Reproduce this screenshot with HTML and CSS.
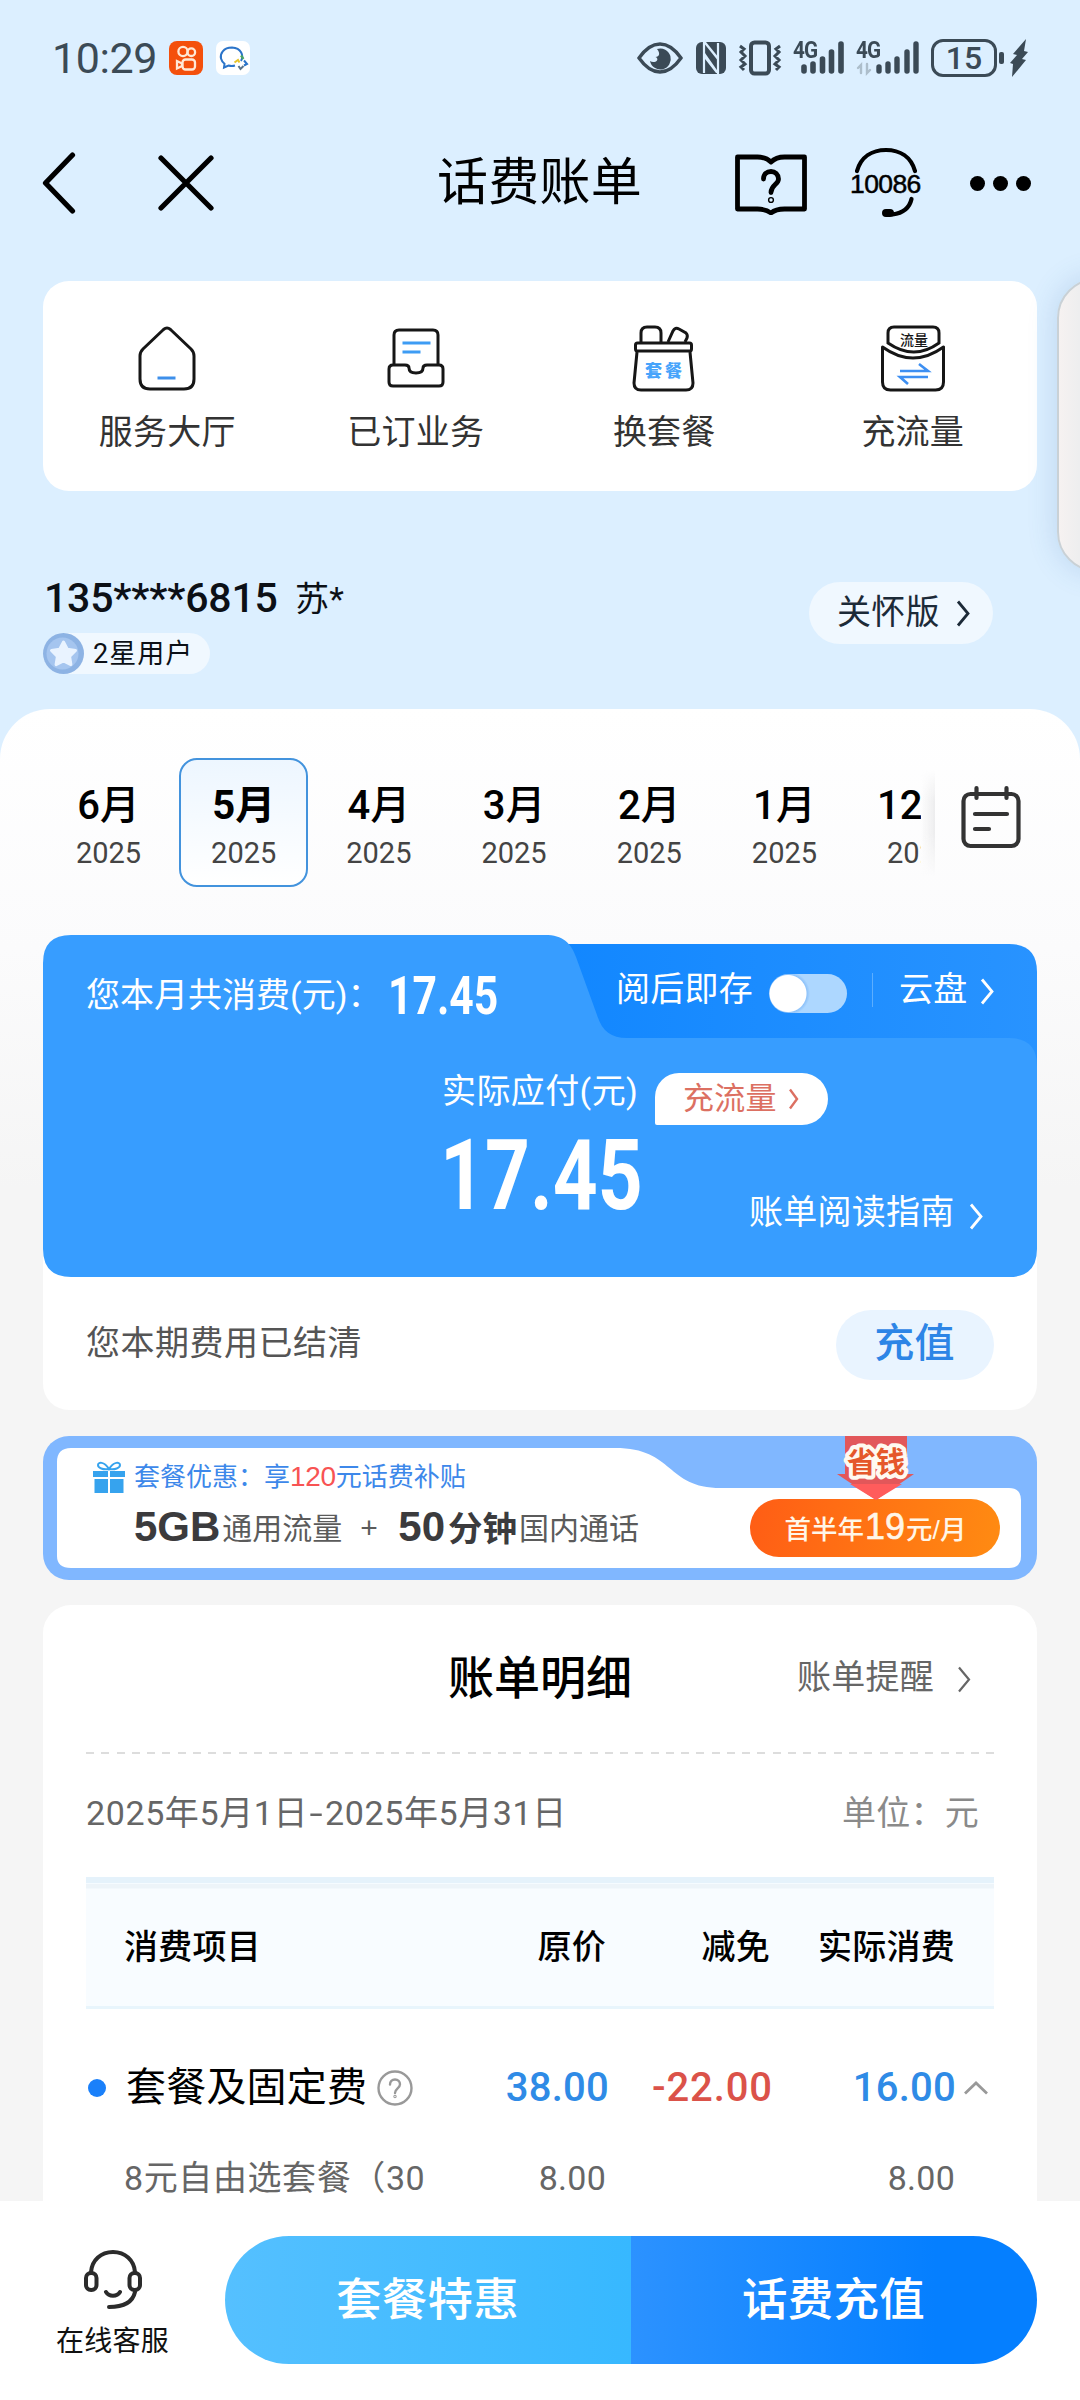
FILE: index.html
```html
<!DOCTYPE html>
<html lang="zh-CN">
<head>
<meta charset="utf-8">
<title>话费账单</title>
<link rel="stylesheet" href="styles.css">
</head>
<body>
<div class="page">
  <main class="content">
    <div class="statusbar">
      <span class="clock">10:29</span>
      <svg class="app-kuai" width="34" height="34" viewBox="0 0 34 34"><rect width="34" height="34" rx="8" fill="#f4500c"/><g fill="none" stroke="#ffe9d6" stroke-width="2.3"><circle cx="14" cy="10.5" r="4.6"/><circle cx="22.3" cy="11.2" r="3.8"/><rect x="13.5" y="18.5" width="12.5" height="10" rx="3"/><path d="M13 22.5l-5-2.5v7.500l5-2.500z"/></g></svg>
      <svg class="app-wecom" width="34" height="34" viewBox="0 0 34 34"><rect width="34" height="34" rx="7" fill="#fff"/><path d="M25 20c3-5 .5-13-9-13.500C7 6.500 4 13 5 17.500c.6 2.500 2 4 3.500 5.200L8 26.500l4.500-2c2 .6 4.500.6 6.500 0" fill="none" stroke="#2b74c9" stroke-width="2"/><path d="M25 14.500l2.500 3.500" stroke="#4aa564" stroke-width="2.200"/><path d="M28 19.500l3 3.500-3 1.500" fill="none" stroke="#2b74c9" stroke-width="2"/><path d="M27.500 25l-3 3-2-3" fill="none" stroke="#59738a" stroke-width="2"/><path d="M18.500 21.500l3.500-2.500 1.500 2.500" fill="none" stroke="#e8c428" stroke-width="2"/></svg>
      <div class="status-icons">
        <svg class="i-eye" width="46" height="34" viewBox="0 0 46 34"><path d="M2 17C9 7 16 3 23 3s14 4 21 14C37 27 30 31 23 31S9 27 2 17z" fill="none" stroke="#3b4a56" stroke-width="3.400"/><path d="M20 8a10.500 10.500 0 1 1-7 12c2 1.500 5.500 1.500 7-.5 1-1.500 0-3-1.500-3.500 4 0 5-4 1.500-8z" fill="#3b4a56"/></svg>
        <svg class="i-nfc" width="32" height="34" viewBox="0 0 32 34"><rect x="1" y="1" width="30" height="32" rx="6" fill="#3b4a56"/><path d="M9 1v31M23 2v31" stroke="#dcefff" stroke-width="2.200"/><path d="M8 1l16 20V17L11 1zM10 12l14 20h-3L10 18z" fill="#dcefff"/></svg>
        <svg class="i-vib" width="44" height="36" viewBox="0 0 44 36" fill="none" stroke="#3b4a56"><rect x="13" y="2.500" width="18" height="31" rx="3.500" stroke-width="4"/><path d="M2 6l4 3-3 3 4 4-4 4 4 4-4 3 3 3M42 6l-4 3 3 3-4 4 4 4-4 4 4 3-3 3" stroke-width="3"/></svg>
        <div class="signal"><span>4G</span><svg width="52" height="36" viewBox="0 0 52 36" stroke="#3b4a56" stroke-width="5.600" stroke-linecap="round"><path d="M11 27v4M20 24v7M29.500 19v12M38.500 12v19M48 4v27"/></svg></div>
        <div class="signal second"><span>4G</span><svg width="64" height="36" viewBox="0 0 64 36" stroke="#3b4a56" stroke-width="5.400" stroke-linecap="round"><path d="M23 27v4M32 24v7M41 19v12M51 12v19M60 4v27"/><path d="M5 33V25l-3 3M11 24v9l3-3" stroke="#adbecb" stroke-width="2.400" fill="none"/></svg></div>
        <div class="battery">15</div>
        <i class="battery-tip"></i>
        <svg class="i-bolt" width="18" height="38" viewBox="0 0 18 38"><path d="M16 0L3 15l4 1-7 8 3 1-1 13 14-17-4-1 6-7-4-1z" fill="#3b4a56"/></svg>
      </div>
    </div>

    <header class="nav">
      <svg class="back" width="34" height="62" viewBox="0 0 34 62"><path d="M30.500 3L3.500 31l27 28" fill="none" stroke="#000" stroke-width="5.200" stroke-linecap="round" stroke-linejoin="round"/></svg>
      <svg class="close" width="56" height="56" viewBox="0 0 56 56"><path d="M3 3l50 50M53 3L3 53" stroke="#000" stroke-width="5.200" stroke-linecap="round"/></svg>
      <h1>话费账单</h1>
      <svg class="book" width="72" height="62" viewBox="0 0 72 62" fill="none" stroke="#000" stroke-width="4.800" stroke-linejoin="round" stroke-linecap="round"><path d="M2.500 4h20C29 4 33 6 36 9c3-3 7-5 13.500-5h20v52h-20C43 56 39 57.500 36 60c-3-2.500-7-4-13.500-4h-20z"/><path d="M28.500 26c0-5 3.500-7.500 7.500-7.500s7.500 3 7.500 7.500c0 5.500-7.500 6-7.500 13.500"/><circle cx="36" cy="47" r=".7"/></svg>
      <div class="hotline">
        <svg width="72" height="74" viewBox="0 0 72 74" fill="none" stroke="#000" stroke-width="4.200" stroke-linecap="round"><path d="M7 25C11 11 22 4 36 4s25 7 29 21M61.500 53c-2 9-8 14-19 15.500"/><rect x="34" y="65" width="8" height="4" rx="2" stroke-width="4"/></svg>
        <span>10086</span>
      </div>
      <div class="dots"><i></i><i></i><i></i></div>
    </header>

    <section class="shortcuts">
      <div class="shortcut">
        <svg width="64" height="70" viewBox="0 0 64 70" fill="none" stroke="#161616" stroke-width="3"><path d="M28.500 4.500q3.500-3 7 0L56 24q3 3 3 7v23q0 10-10 10H15Q5 64 5 54V31q0-4 3-7z"/><path d="M22.500 53h18" stroke="#3d8fea"/></svg>
        <span>服务大厅</span>
      </div>
      <div class="shortcut">
        <svg width="64" height="70" viewBox="0 0 64 70" fill="none" stroke="#161616" stroke-width="3"><path d="M10 41V10q0-5 5-5h34q5 0 5 5v31"/><path d="M9 40h12q4 0 4 3 0 5 7 5t7-5q0-3 4-3h12q4 0 4 4v13q0 4-4 4H9q-4 0-4-4V44q0-4 4-4z" stroke-linejoin="round"/><path d="M18.500 18h28M18.500 27h18" stroke="#3d9cf4"/></svg>
        <span>已订业务</span>
      </div>
      <div class="shortcut">
        <svg width="64" height="70" viewBox="0 0 64 70" fill="none" stroke="#161616" stroke-width="3"><path d="M9 17V8q0-6 6-6h8q6 0 6 6v9M36 17l5-11q2-4 6-2l7 4q2 2 1 5l-2 4"/><rect x="3.500" y="18" width="56" height="8" rx="2"/><path d="M5 27L2 58q0 7 7 7h45q7 0 7-7L58 27"/><text x="33" y="52" class="mini blue">套餐</text></svg>
        <span>换套餐</span>
      </div>
      <div class="shortcut">
        <svg width="64" height="70" viewBox="0 0 64 70" fill="none" stroke="#161616" stroke-width="3"><path d="M7 8q0-6 6-6h39q6 0 6 6v10Q33 36 7 18z"/><path d="M1.500 22Q32 44 62.500 22v35q0 8-8 8h-45q-8 0-8-8z" stroke-linejoin="round"/><path d="M19 46h28l-9-7M47 52H19l8 7" stroke="#3d8ff2" stroke-width="2.600"/><text x="33" y="20" class="mini">流量</text></svg>
        <span>充流量</span>
      </div>
    </section>

    <section class="account">
      <div>
        <div class="phone"><b>135****6815</b><span>苏*</span></div>
        <div class="level">
          <svg width="41" height="41" viewBox="0 0 41 41"><circle cx="20.500" cy="20.500" r="20.500" fill="#8db3e4"/><circle cx="19.500" cy="20.500" r="16" fill="#a5c5ef"/><path d="M20.500 9l3.800 7.200 8.200 1.300-5.900 5.900 1.300 8.200-7.400-3.700-7.400 3.700 1.300-8.200-5.900-5.900 8.200-1.300z" fill="#e9f3ff" stroke="#e9f3ff" stroke-width="3" stroke-linejoin="round"/></svg>
          <span>2星用户</span>
        </div>
      </div>
      <div class="care">关怀版<svg class="chev" width="15" height="27" viewBox="0 0 15 27"><path d="M2 1.500l10 12-10 12"/></svg></div>
    </section>

    <section class="sheet">
      <div class="monthbar">
        <div class="months">
          <div class="month"><b>6月</b><span>2025</span></div>
          <div class="month active"><b>5月</b><span>2025</span></div>
          <div class="month"><b>4月</b><span>2025</span></div>
          <div class="month"><b>3月</b><span>2025</span></div>
          <div class="month"><b>2月</b><span>2025</span></div>
          <div class="month"><b>1月</b><span>2025</span></div>
          <div class="month"><b>12月</b><span>2024</span></div>
        </div>
        <div class="fade"></div>
        <svg class="calendar" width="60" height="64" viewBox="0 0 60 64" fill="none" stroke="#333" stroke-width="4.200" stroke-linecap="round"><rect x="2.500" y="9" width="55" height="52" rx="7"/><path d="M15.500 3v10M45.500 3v10M14 29h32M14 44h14"/></svg>
      </div>

      <div class="bill">
        <div class="folder">
          <svg class="folder-bg" width="994" height="342" viewBox="0 0 994 342"><defs><linearGradient id="tab" x1="0" x2="1"><stop offset="0" stop-color="#1086ff"/><stop offset="1" stop-color="#2893ff"/></linearGradient></defs><path d="M480 9h486q28 0 28 28v120H480z" fill="url(#tab)"/><path d="M0 28Q0 0 28 0h474c18 0 26 8 31 22l21 58c5 16 14 23 30 23h382q28 0 28 28v183q0 28-28 28H28q-28 0-28-28z" fill="#379dff"/></svg>
          <div class="total"><span>您本月共消费(元)：</span><b class="din">17.45</b></div>
          <div class="cloud"><span>阅后即存</span><i class="switch"></i><i class="sep"></i><span>云盘</span><svg class="chev" width="15" height="27" viewBox="0 0 15 27"><path d="M2 1.500l10 12-10 12"/></svg></div>
          <div class="due"><span>实际应付(元)</span><div class="flow">充流量<svg class="chev" width="12" height="22" viewBox="0 0 12 22"><path d="M2 1.500l7 9.500-7 9.500"/></svg></div></div>
          <div class="amount"><b class="din">17.45</b></div>
          <div class="guide">账单阅读指南<svg class="chev" width="15" height="27" viewBox="0 0 15 27"><path d="M2 1.500l10 12-10 12"/></svg></div>
        </div>
        <div class="settled"><span>您本期费用已结清</span><div class="topup">充值</div></div>
      </div>

      <div class="promo">
        <svg class="promo-bg" width="994" height="144" viewBox="0 0 994 144"><path d="M14 26q0-14 14-14h544c60 0 50 40 106 40h288q12 0 12 12v56q0 12-12 12H28q-14 0-14-12z" fill="#fff"/></svg>
        <div class="promo-text">
          <div class="offer"><svg width="34" height="34" viewBox="0 0 34 34"><path d="M1 11h15v6H1zM18 11h15v6H18zM2.500 19H16v14H2.500zM18 19h13.500v14H18z" fill="#36a3ee"/><path d="M17 9C11 10 6 8 6 5s6-4 11 4c5-8 11-7 11-4s-5 5-11 4z" fill="none" stroke="#36a3ee" stroke-width="2"/></svg><span>套餐优惠：享<em>120</em>元话费补贴</span></div>
          <div class="pack"><b>5GB</b><span>通用流量</span><i>+</i><b>50<small>分钟</small></b><span>国内通话</span></div>
        </div>
        <svg class="save" width="80" height="66" viewBox="0 0 80 66"><path d="M9 0h62v38h7L40 64 1 38h8z" fill="#e2575a"/><path d="M14 48h52L40 64z" fill="#ff5c5c"/><text x="40" y="37">省钱</text></svg>
        <div class="price">首半年<b>19</b>元/月</div>
      </div>

      <div class="detail">
        <div class="detail-head"><h2>账单明细</h2><div class="remind">账单提醒<svg class="chev" width="15" height="27" viewBox="0 0 15 27"><path d="M2 1.500l10 12-10 12"/></svg></div></div>
        <div class="dash"></div>
        <div class="period"><span class="range">2025年5月1日<i>-</i>2025年5月31日</span><span class="unit">单位：元</span></div>
        <div class="row thead"><span>消费项目</span><span>原价</span><span>减免</span><span>实际消费</span></div>
        <div class="row group"><span class="name"><i class="bullet"></i>套餐及固定费<svg width="36" height="36" viewBox="0 0 36 36" fill="none" stroke="#999" stroke-width="2.400"><circle cx="18" cy="18" r="16.500"/><path d="M13 14.500c0-3 2-5 5-5s5 2 5 4.800c0 4-5 4.200-5 8.700" stroke-linecap="round"/><circle cx="18" cy="26.500" r=".5"/></svg></span><span class="blue-num">38.00</span><span class="red-num">-22.00</span><span class="blue-num">16.00</span><svg class="caret" width="26" height="14" viewBox="0 0 26 14"><path d="M2 12.500L13 2l11 10.500" fill="none" stroke="#999" stroke-width="2.800"/></svg></div>
        <div class="row item"><span class="sub">8元自由选套餐（30</span><span>8.00</span><span></span><span>8.00</span></div>
      </div>
    </section>
  </main>

  <footer class="footer">
    <div class="service">
      <svg width="60" height="62" viewBox="0 0 60 62" fill="none" stroke="#2b2b2b" stroke-width="4" stroke-linecap="round"><path d="M8 23C9 11 18 3 30 3s21 8 22 20M52 43c-2 9-10 15-26 15M23 43c3 5 11 5 14 0"/><rect x="3" y="24" width="10.500" height="17" rx="5"/><rect x="46.500" y="24" width="10.500" height="17" rx="5"/></svg>
      <span>在线客服</span>
    </div>
    <div class="actions"><div class="deal">套餐特惠</div><div class="recharge">话费充值</div></div>
  </footer>
  <div class="edge-panel"></div>
</div>
</body>
</html>
```

FILE: styles.css
```css
* { box-sizing: border-box; }
body { margin: 0; }
svg { display: block; flex: none; }
i, em { font-style: normal; }
h1, h2 { margin: 0; }

.page {
  position: relative;
  width: 1080px;
  height: 2400px;
  overflow: hidden;
  display: flex;
  flex-direction: column;
  background: #dcefff;
  color: #333;
  font: 34px/1.2 Roboto, "Noto Sans CJK SC", sans-serif;
  letter-spacing: .25px;
  white-space: nowrap;
}
.content { height: 2201px; overflow: hidden; display: flex; flex-direction: column; flex: none; }

/* status bar */
.statusbar { height: 115px; padding: 0 53px 0 52px; display: flex; align-items: center; color: #3b4a56; flex: none; }
.clock { font-size: 43px; letter-spacing: -0.4px; width: 117px; line-height: 50px; padding-top: 1px; }
.app-wecom { margin-left: 13px; }
.status-icons { display: flex; align-items: center; margin-left: auto; margin-right: -1px; }
.i-nfc { margin-left: 12px; }
.i-vib { margin-left: 11px; }
.signal { position: relative; margin-left: 11px; }
.signal.second { margin-left: 11px; }
.signal span { position: absolute; left: 0; top: -1px; font: 700 23px/23px Roboto, sans-serif; letter-spacing: -1px; transform: scaleX(.9); transform-origin: 0 0; }
.battery { width: 66px; height: 38px; margin-left: 11px; border: 3px solid #3b4a56; border-radius: 12px; font: 500 32px/33px Roboto, sans-serif; text-align: center; letter-spacing: 0; }
.battery-tip { width: 5px; height: 12px; border-radius: 2px; background: #3b4a56; margin: 0 6px 0 2px; }

/* navigation */
.nav { height: 136px; display: flex; align-items: center; padding-left: 42px; color: #000; flex: none; }
.close { margin-left: 82px; }
.nav h1 { font-size: 51px; font-weight: 400; line-height: 60px; margin-left: 223px; width: 206px; }
.book { margin-left: 92px; margin-top: 2px; }
.hotline { position: relative; margin-left: 43px; }
.hotline span { position: absolute; left: 0; top: 23px; font: 400 26.500px/30px "Liberation Sans", sans-serif; letter-spacing: -0.6px; -webkit-text-stroke: .5px #000; }
.dots { display: flex; gap: 8px; margin-left: 48px; }
.dots i { width: 15px; height: 15px; border-radius: 50%; background: #000; }

/* shortcuts */
.shortcuts { margin: 30px 43px 0; height: 210px; border-radius: 26px; background: #fff; display: grid; grid-template-columns: repeat(4, 1fr); flex: none; }
.shortcut { display: flex; flex-direction: column; align-items: center; padding-top: 44px; }
.shortcut span { line-height: 40px; margin-top: 17px; }
.mini { font: 500 14px "Noto Sans CJK SC", sans-serif; text-anchor: middle; fill: #161616; stroke: none; letter-spacing: 0; }
.mini.blue { font-size: 17px; font-weight: 900; letter-spacing: 3px; fill: #47a4fb; }

/* account */
.account { height: 218px; padding: 88px 87px 0 43px; display: flex; justify-content: space-between; flex: none; color: #0c1016; }
.phone { display: flex; align-items: center; height: 40px; }
.phone b { font-size: 41px; font-weight: 500; width: 252px; letter-spacing: -.2px; padding-left: 1px; }
.level { display: flex; align-items: center; width: 167px; height: 41px; margin-top: 14px; border-radius: 21px; background: #f0f8ff; font-size: 27px; letter-spacing: 1px; }
.level span { margin: 2px 0 0 9px; }
.care { width: 184px; height: 62px; margin-top: 3px; padding-left: 28px; border-radius: 31px; background: #f0f8ff; display: flex; align-items: center; color: #1c2a38; line-height: 58px; padding-bottom: 2px; }
.chev { fill: none; stroke: currentColor; stroke-width: 2.8; }
.care .chev { margin: 2px 0 0 16px; }

/* sheet */
.sheet { height: 1492px; border-radius: 50px 50px 0 0; background: linear-gradient(#fff 0, #fbfbfc 240px, #f5f5f5 480px); padding: 49px 43px 0; flex: none; }
.monthbar { height: 129px; display: flex; align-items: center; }
.months { width: 878px; padding-left: 1px; display: flex; overflow: hidden; flex: none; gap: 6.2px; }
.month { width: 129px; height: 129px; border-radius: 18px; flex: none; display: flex; flex-direction: column; align-items: center; padding-top: 24px; color: #000; letter-spacing: 0; }
.month.active { border: 2px solid #4393dd; background: linear-gradient(#edf6ff, #fff); padding-top: 22px; }
.month b { font-size: 40px; line-height: 48px; font-weight: 500; }
.month.active b { font-weight: 700; }
.month span { font-size: 29px; line-height: 34px; margin-top: 6px; color: #444; }
.fade { width: 14px; height: 106px; margin-right: 26px; background: linear-gradient(90deg, #fdfdfd00, #ededee); mask-image: linear-gradient(transparent, #000 30%, #000 60%, transparent); }
.calendar { margin-bottom: 12px; }

/* bill */
.bill { margin-top: 48px; background: linear-gradient(transparent 100px, #fff 100px); border-radius: 26px; height: 475px; }
.folder { position: relative; height: 342px; color: #fff; display: grid; grid-template: 103px 104px 135px / 387px 186px 1fr; }
.folder-bg { position: absolute; left: 0; top: 0; }
.folder > div { position: relative; display: flex; align-items: center; }
.din { font-weight: 700; display: block; transform-origin: 0 50%; transform: scaleX(.79); letter-spacing: 0; }
.total { grid-column: 1 / 3; padding: 18px 0 0 43px; }
.total span { width: 302px; letter-spacing: 0; }
.total .din { font-size: 54px; line-height: 56px; }
.cloud { padding-top: 6px; }
.switch { width: 78px; height: 39px; margin: 8px 25px 0 16px; border-radius: 20px; background: radial-gradient(circle at 19px 50%, #fff 18px, #8fc3fa 19px, #add7ff 22px); }
.sep { width: 1px; height: 34px; margin-right: 26px; background: #5caeff; }
.cloud .chev { margin-left: 12px; margin-top: 4px; }
.due { grid-column: 1 / 4; padding-left: 399px; }
.due > span { width: 213px; padding-top: 2px; letter-spacing: .4px; }
.flow { width: 173px; height: 52px; margin-top: 17px; border-radius: 24px 26px 26px 2px; background: #fff; color: #dc7062; font-size: 31px; display: flex; align-items: center; padding-left: 28px; }
.flow .chev { margin-left: 11px; stroke-width: 2.4; }
.amount { grid-column: 1 / 3; padding-left: 397px; }
.amount .din { font-size: 98px; line-height: 100px; margin-top: -67px; transform: scaleX(.8); }
.guide { padding-left: 133px; height: 40px; margin-top: 50px; }
.guide .chev { margin: 8px 0 0 14px; }
.settled { height: 133px; padding: 0 43px 0 43px; display: flex; align-items: center; justify-content: space-between; color: #555; }
.settled span { letter-spacing: .5px; }
.topup { width: 158px; height: 70px; border-radius: 35px; background: #e9f4ff; color: #2d85e6; font-size: 40px; font-weight: 500; line-height: 67px; text-align: center; margin-top: 3px; padding-right: 1px; }

/* promo */
.promo { position: relative; height: 144px; margin-top: 26px; border-radius: 26px; background: #80b7ff; display: flex; letter-spacing: 0; }
.promo-bg { position: absolute; left: 0; top: 0; }
.promo-text { position: relative; padding: 22px 0 0 49px; width: 707px; font-family: "Liberation Sans", "Noto Sans CJK SC", sans-serif; }
.offer { display: flex; align-items: center; height: 38px; font-size: 26px; color: #3d88ea; }
.offer span { margin-left: 8px; }
.offer em { font-size: 28px; color: #f85353; letter-spacing: -.3px; }
.pack { display: flex; align-items: baseline; margin: 8px 0 0 42px; height: 46px; line-height: 46px; font-size: 30px; color: #5b5b5b; }
.pack b { font-size: 42px; color: #3b3b3d; }
.pack b small { font-size: 34.500px; margin-left: 3px; }
.pack span { position: relative; top: -2px; margin-left: 2px; }
.pack i { width: 18px; margin: 0 20px 0 18px; position: relative; top: -3px; }
.price { position: relative; width: 250px; height: 58px; margin-top: 63px; border-radius: 29px; background: linear-gradient(100deg, #ff5d15, #ff8b12); color: #fff6e8; font: 500 26.500px/56px "Liberation Sans", "Noto Sans CJK SC", sans-serif; text-align: center; padding-left: 1px; }
.price b { font-weight: 400; font-size: 36px; margin: 0 1px; -webkit-text-stroke: .6px #fff6e8; }
.save { position: absolute; left: 793px; top: 0; z-index: 1; }
.save text { font: 700 29px "Noto Sans CJK SC", sans-serif; text-anchor: middle; fill: #e5582b; stroke: #fff9f0; stroke-width: 8px; stroke-linejoin: round; paint-order: stroke; }

/* detail */
.detail { margin-top: 25px; height: 640px; border-radius: 28px 28px 0 0; background: #fff; padding: 0 43px; }
.detail-head { height: 147px; display: flex; align-items: center; justify-content: flex-end; position: relative; padding-bottom: 2px; }
.detail-head h2 { flex: 1; margin-left: 362px; font-size: 46px; font-weight: 500; line-height: 56px; color: #000; letter-spacing: 0; }
.remind { display: flex; align-items: center; color: #666; padding-right: 22px; }
.remind .chev { margin: 5px 0 0 23px; stroke-width: 2.2; }
.dash { height: 2px; background: repeating-linear-gradient(90deg, #ddd 0 8px, transparent 8px 15.260px); }
.period { height: 123px; padding: 0 15px 5px 0; display: flex; align-items: center; justify-content: space-between; color: #666; }
.range { letter-spacing: .6px; }
.range i { display: inline-block; width: 17px; text-align: center; transform: scaleX(1.4); }
.unit { color: #8a8a8a; }
.row { display: grid; grid-template-columns: 284px 198px 164px 185px 1fr; align-items: center; padding-left: 38px; position: relative; }
.row > span { text-align: right; }
.row > span:first-child { text-align: left; }
.thead { height: 132px; padding-right: 0; color: #000; background: linear-gradient(#e5f2fb 0 6px, #f5fbff 6px 7px, #edf4f9 7px 11px, #f8fcff 12px 129px, #e8f5fc 129px); font-weight: 500; padding-top: 8px; }
.group { height: 158px; color: #000; font-size: 40px; font-weight: 500; }
.group > span:not(.name) { position: relative; left: 3px; }
.group > .blue-num:nth-of-type(4) { left: 1px; }
.name { display: flex; align-items: center; font-weight: 400; letter-spacing: .2px; }
.name .bullet { width: 18px; height: 18px; margin: 0 20px 0 -38px; border-radius: 50%; background: #1a80fa; flex: none; }
.name svg { margin-left: 10px; }
.name { padding-left: 38px; margin-left: -38px; position: relative; left: 2px; }
.blue-num { color: #2f8be6; }
.red-num { color: #db5249; letter-spacing: .9px; }
.caret { margin-left: 8px; }
.item { height: 22px; margin-top: 0; line-height: 22px; color: #666; }
.sub { letter-spacing: .6px; }

/* footer */
.footer { height: 199px; background: #fff; display: flex; padding: 35px 43px 0 0; flex: none; position: relative; }
.service { width: 225px; display: flex; flex-direction: column; align-items: center; font-size: 28px; color: #111; padding-top: 13px; }
.service svg { margin-bottom: 14px; }
.actions { width: 812px; height: 128px; border-radius: 64px; overflow: hidden; display: grid; grid-template-columns: 1fr 1fr; color: #fff; font-size: 45.500px; font-weight: 500; line-height: 130px; text-align: center; }
.deal { background: linear-gradient(90deg, #55c0ff, #37b8ff); padding-right: 1px; }
.recharge { background: linear-gradient(90deg, #2c92ff, #057fff 75%); padding-right: 1px; }

/* system edge drawer */
.edge-panel { position: absolute; left: 1057px; top: 278px; width: 80px; height: 294px; border: 2px solid #c9d1d6; border-radius: 46px; background: linear-gradient(90deg, #f6f2f1, #eeeeef 20px); box-shadow: 0 0 30px rgba(60, 110, 170, .2); }
```
